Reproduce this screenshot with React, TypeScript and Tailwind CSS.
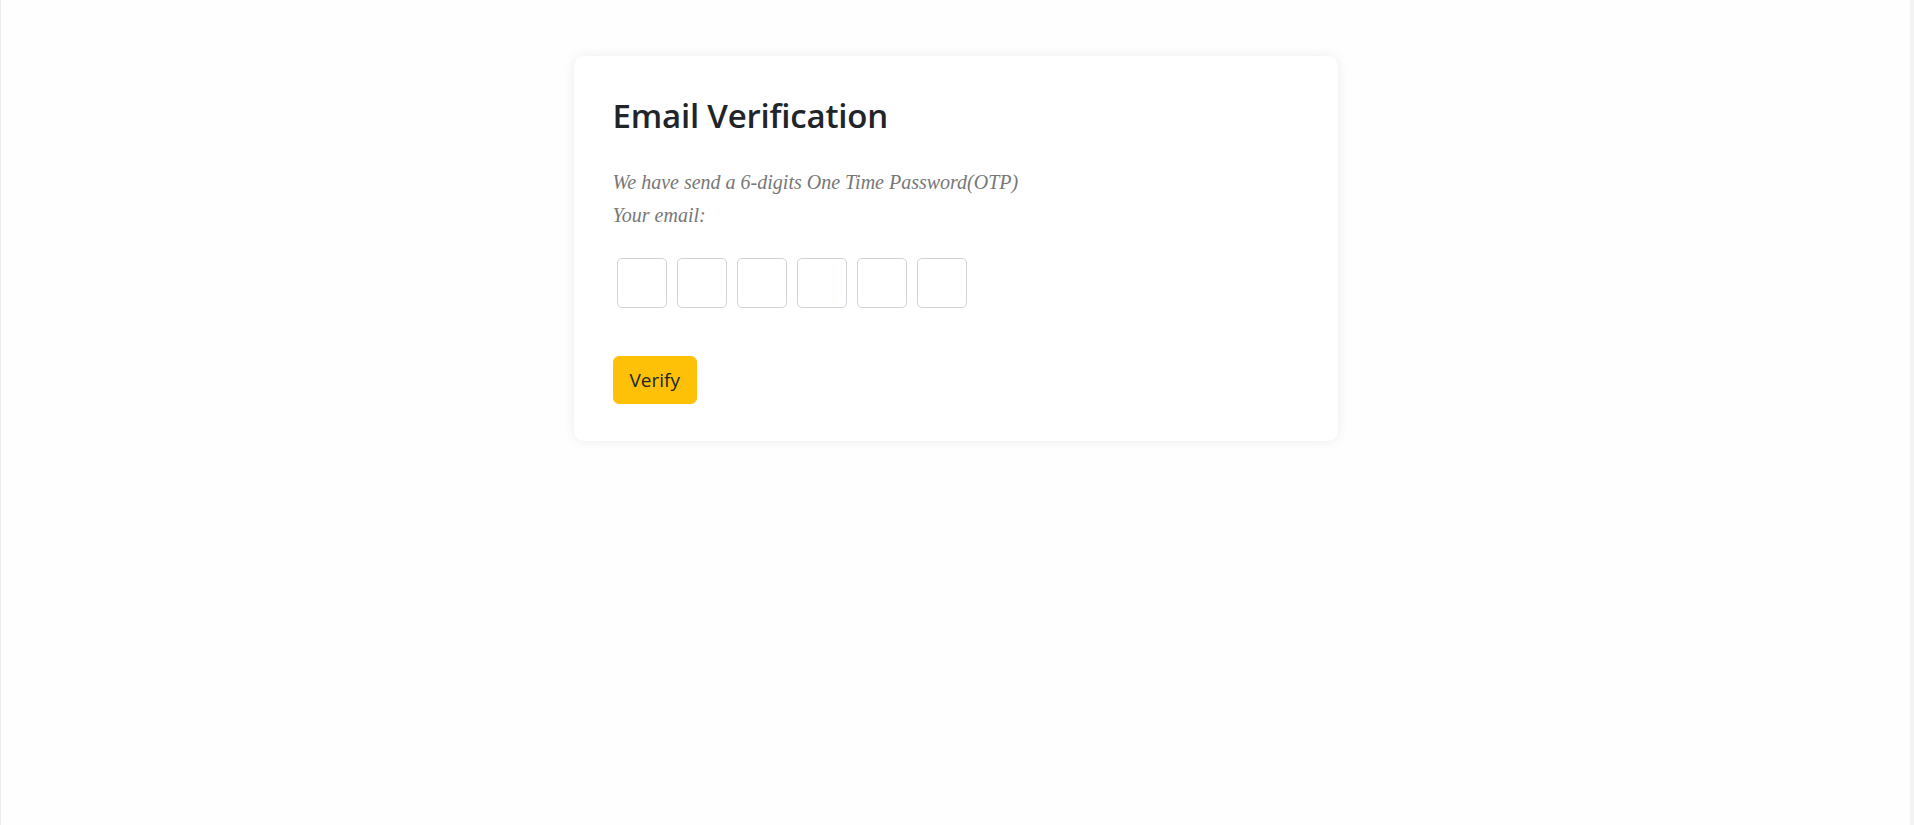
export default function App() {
  const digits = [0, 1, 2, 3, 4, 5]

  return (
    <div className="min-h-[825px] bg-[#fefefe] border-l border-[#ececec] border-r-4 border-r-[#f3f3f3] font-['Open_Sans',sans-serif]">
      <div className="pt-[56px]">
        <div className="mx-auto w-[764px] rounded-[10px] bg-white shadow-[0_0_12px_rgba(0,0,0,0.08)] px-[39px] pt-[40px] pb-[37px]">
          <h2 className="text-[33px] leading-[1.2] font-semibold text-[#212529] tracking-[-0.2px]">
            Email Verification
          </h2>

          <div className="mt-[30px] font-['Liberation_Serif',serif] italic text-[20px] leading-[33px] text-[#777777]">
            <p>We have send a 6-digits One Time Password(OTP)</p>
            <p>Your email:</p>
          </div>

          <div className="mt-[26px] flex gap-[10px] pl-[4px]">
            {digits.map((d) => (
              <input
                key={d}
                type="text"
                maxLength={1}
                className="w-[50px] h-[50px] rounded-[5px] border border-[#ced4da] bg-white text-center text-xl outline-none"
              />
            ))}
          </div>

          <button className="mt-[48px] rounded-[6px] bg-[#ffc107] border border-[#ffc107] px-[16px] py-[8px] text-[19px] leading-[30px] text-[#212529]">
            Verify
          </button>
        </div>
      </div>
    </div>
  )
}
